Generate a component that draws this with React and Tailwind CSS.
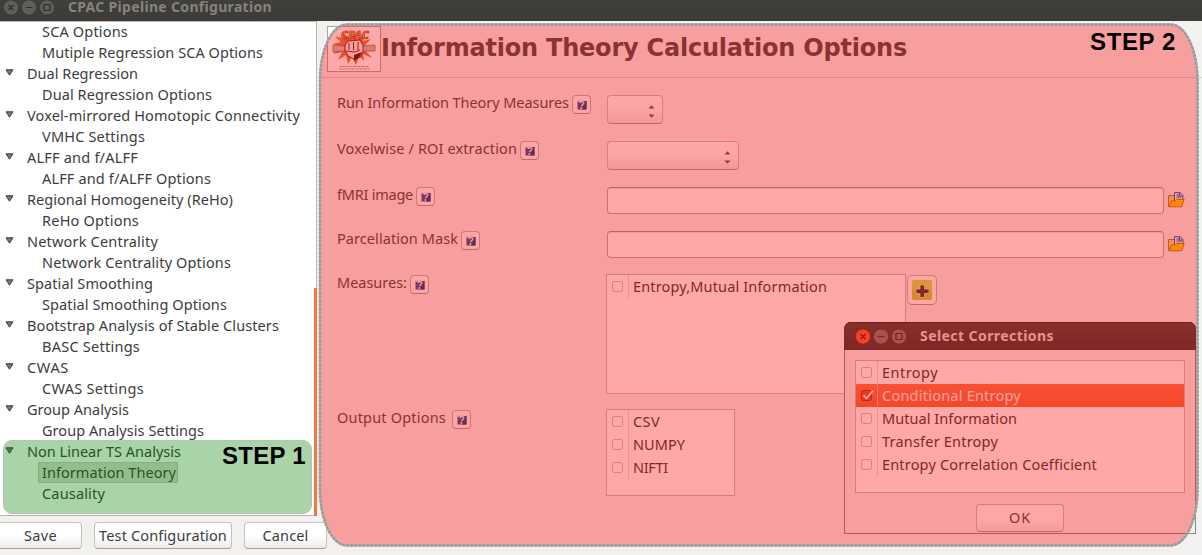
import { useLayoutEffect, useRef } from "react";

/* Single line of text, tracked so that it fills the given width. */
function Fit({ w, className = "", children }) {
  const ref = useRef(null);
  useLayoutEffect(() => {
    const el = ref.current;
    el.style.letterSpacing = "0px";
    const natural = el.getBoundingClientRect().width;
    el.style.letterSpacing = `${(w - natural) / children.length}px`;
  }, [w, children]);
  return (
    <span ref={ref} className={`inline-block shrink-0 whitespace-nowrap ${className}`}>
      {children}
    </span>
  );
}

const TREE = [
  ["SCA Options", 86, 1],
  ["Mutiple Regression SCA Options", 221, 1],
  ["Dual Regression", 111, 0],
  ["Dual Regression Options", 170, 1],
  ["Voxel-mirrored Homotopic Connectivity", 273, 0],
  ["VMHC Settings", 103, 1],
  ["ALFF and f/ALFF", 111, 0],
  ["ALFF and f/ALFF Options", 169, 1],
  ["Regional Homogeneity (ReHo)", 206, 0],
  ["ReHo Options", 97, 1],
  ["Network Centrality", 131, 0],
  ["Network Centrality Options", 189, 1],
  ["Spatial Smoothing", 126, 0],
  ["Spatial Smoothing Options", 185, 1],
  ["Bootstrap Analysis of Stable Clusters", 252, 0],
  ["BASC Settings", 98, 1],
  ["CWAS", 42, 0],
  ["CWAS Settings", 102, 1],
  ["Group Analysis", 102, 0],
  ["Group Analysis Settings", 162, 1],
  ["Non Linear TS Analysis", 154, 0],
  ["Information Theory", 134, 1],
  ["Causality", 63, 1],
];

function TreeRow({ label, width, child }) {
  const selected = label === "Information Theory";
  return (
    <li className="flex h-[21px] shrink-0 items-center">
      {child ? (
        <span
          className={`ml-[38px] flex h-[21px] items-center border pb-px pl-[3px] pr-px ${
            selected ? "border-[#cfcbc6] bg-[#e1ddd8]" : "border-transparent"
          }`}
        >
          <Fit w={width}>{label}</Fit>
        </span>
      ) : (
        <>
          <svg width="9" height="7" viewBox="0 0 9 7" className="mb-[3px] ml-[5px] mr-[13px] shrink-0">
            <path d="M1 .8h7L4.5 6.2z" fill="#7b7a76" stroke="#3c3b37" strokeWidth="1" />
          </svg>
          <Fit w={width} className="pb-px">{label}</Fit>
        </>
      )}
    </li>
  );
}

function WindowButtons({ active }) {
  const fill = active ? "#7d7a74" : "#5f5e59";
  const ink = active ? "#34332f" : "#2e2d2a";
  return (
    <svg width="52" height="17" viewBox="0 0 52 17" className="shrink-0">
      <circle cx="8" cy="8.5" r="7.6" fill={active ? "#f4603a" : fill} stroke={active ? "#4a2a22" : "#35342f"} strokeWidth=".7" />
      <circle cx="26" cy="8.5" r="7.6" fill={fill} stroke="#35342f" strokeWidth=".7" />
      <circle cx="44" cy="8.5" r="7.6" fill={fill} stroke="#35342f" strokeWidth=".7" />
      <path d="M5.500 6l5 5M10.500 6l-5 5M22.500 8.500h7M41 5.500h6v6h-6z" fill="none" stroke={ink} strokeWidth="1.200" />
    </svg>
  );
}

function HelpButton({ className = "" }) {
  return (
    <span
      className={`flex h-[19px] w-[19px] shrink-0 items-center justify-center rounded-[4px] border border-[#b9b5af] border-b-[#a29d97] bg-[#fbfafa] ${className}`}
    >
      <svg width="10" height="10" viewBox="0 0 10 10">
        <path d="M.5 1h9v8.500h-9z" fill="#2c5594" />
        <path d="M5 9.500L9.500 .5v9z" fill="#1f3f86" />
        <path d="M.5 .5h6L5 2H.5z" fill="#c9d6ea" />
        <path d="M3 3C3.500 1.200 7.200 1 6.800 3.200 6.500 4.500 4.900 4.600 4.600 6.200" fill="none" stroke="#f2f5fa" strokeWidth="1.300" />
        <path d="M3.600 7.200h1.600v1.600H3.600z" fill="#fff" />
      </svg>
    </span>
  );
}

function Field({ label, width, gap = "ml-[3px]", children }) {
  return (
    <>
      <div className="flex items-start">
        <Fit w={width} className="-mt-px h-4 leading-4">{label}</Fit>
        <HelpButton className={gap} />
      </div>
      <div className="flex items-start">{children}</div>
    </>
  );
}

function Select({ className }) {
  return (
    <div
      className={`flex h-[29px] items-center justify-end rounded-[4px] border border-[#c4bfb8] border-b-[#a39d96] bg-linear-to-b from-white via-[#fbfafa] to-[#e9e7e6] pr-[7px] pt-[3px] ${className}`}
    >
      <svg width="7" height="13" viewBox="0 0 7 13">
        <path d="M.5 3.500L3.500 .3l3 3.200zM.5 9.500h6l-3 3.200z" fill="#5c5a55" />
      </svg>
    </div>
  );
}

function FileInput() {
  return (
    <>
      <div className="h-[27px] w-[557px] rounded-[4px] border border-[#b0aaa3] border-t-[#9b958e] bg-white shadow-[inset_0_1px_0_#ebe9e7]" />
      <svg width="17" height="16" viewBox="0 0 17 16" className="ml-1 mt-[5px]">
        <path d="M.6 14.500V3.500h5.500l1 1.500V12z" fill="#f6d878" stroke="#b0801c" />
        <path d="M6.500 9V.6h5.500L15 3.500V9z" fill="#e4f0ff" stroke="#1c5fb0" />
        <path d="M8.500 3h3M8.500 5h5M11.500 1v3H15" fill="none" stroke="#1c5fb0" />
        <path d="M.7 14.800l3-6h3.500l1.500-1.500h7.500l-2.500 7.500z" fill="#fbcf00" stroke="#b0801c" />
      </svg>
    </>
  );
}

function CheckRow({ label, width, checked }) {
  return (
    <div
      className={`flex h-[23px] items-center ${
        checked ? "bg-linear-to-b from-[#f4794f] to-[#ef6b3d] text-[#fdf3ef]" : "text-[#3c3c3c]"
      }`}
    >
      <span className="flex h-full w-[22px] items-center border-r border-[#d3cfcb]/70 pl-[5px]">
        <svg width="15" height="13" viewBox="0 0 15 13" className="shrink-0 overflow-visible">
          <rect x=".5" y="1.500" width="10" height="10" rx="1.800" fill={checked ? "#e0552b" : "#fff"} stroke={checked ? "#a83a18" : "#c9c3bd"} />
          {checked && <path d="M2.500 6l3 3.500L12 1.800" fill="none" stroke="#fff" strokeWidth="1.700" />}
        </svg>
      </span>
      <Fit w={width} className="ml-1 pb-0.5">{label}</Fit>
    </div>
  );
}

function CheckList({ items, className }) {
  return (
    <div className={`shrink-0 border border-[#c2bcb6] bg-white ${className}`}>
      {items.map(([label, width, checked]) => (
        <CheckRow key={label} label={label} width={width} checked={checked} />
      ))}
    </div>
  );
}

function Button({ label, width, className }) {
  return (
    <button
      className={`flex shrink-0 items-center justify-center rounded-[4px] border border-[#c4c0bb] border-b-[#a5a09a] bg-linear-to-b from-white from-50% to-[#edebea] pb-0.5 ${className}`}
    >
      <Fit w={width}>{label}</Fit>
    </button>
  );
}

function Logo() {
  return (
    <svg width="54" height="46" viewBox="0 0 54 46" className="shrink-0">
      <rect x=".5" y=".5" width="53" height="45" fill="#fff" stroke="#a9a5a1" />
      <path
        d="M27 9l3 4 8-5-2 7 8-2-6 6 8 3-8 2 7 8-9-4 1 7-5-5-3 9-4-8-4 7-2-9-8 5 4-8-9 2 7-7-7-3 8-2-6-6 9 3-2-7 7 6z"
        fill="#e2733c"
      />
      <path d="M6 19l12 1v5l-12 1zM35 20l13-1v6H35z" fill="#c9bcb6" stroke="#8b7268" strokeWidth=".8" />
      <path d="M18 19l3-4 12-1 3 5v7l-3 5-6 2-6-3-3-6z" fill="#f8efec" stroke="#52231a" strokeWidth=".9" />
      <path d="M22 17v7M26.500 16v8M31 16v8M19 25l9 1 5-2" fill="none" stroke="#64291f" strokeWidth="1" />
      <path d="M27 29l8-3-3 6-5 3z" fill="#471a14" />
      <text x="14" y="13" fontFamily="DejaVu Sans" fontSize="10.500" fontWeight="bold" fontStyle="italic" fill="#efa04c" stroke="#7a3c14" strokeWidth=".6" textLength="28" lengthAdjust="spacingAndGlyphs">
        CPAC
      </text>
      <path d="M13 40.500h29M12 43h31" stroke="#a5a09d" strokeWidth="1" strokeDasharray="2 .6" />
    </svg>
  );
}

export default function App() {
  return (
    <div className="relative flex h-[555px] w-[1202px] flex-col overflow-hidden bg-[#f2f1f0] font-['Noto_Sans',sans-serif] text-[14.5px] leading-5 text-[#4c4c4c]">
      <header className="flex h-[21px] shrink-0 items-start bg-linear-to-b from-[#403f3a] to-[#3c3b37] pl-[3px]">
        <div className="-mt-px">
          <WindowButtons />
        </div>
        <Fit w={204} className="ml-[13px] text-[14px] font-bold leading-[14px] text-[#85837c]">CPAC Pipeline Configuration</Fit>
      </header>

      <div className="flex min-h-0 flex-1">
        <aside className="flex w-[317px] shrink-0 flex-col text-[#3c3c3c]">
          <div className="relative h-[495px] border-y border-r border-[#b8b4af] bg-white">
            <ul className="-mt-px flex flex-col">
              {TREE.map(([label, width, child]) => (
                <TreeRow key={label} label={label} width={width} child={child} />
              ))}
            </ul>
            <div className="absolute -right-px bottom-[-1px] h-[228px] w-[3px] bg-[#f07746]" />
            <div className="absolute left-[3px] top-[418px] flex h-[74px] w-[309px] justify-end rounded-[9px] border border-[#b5c4b5] bg-[rgba(0,128,0,0.34)] pr-[5px] pt-[5px]">
              <Fit w={84} className="font-['Liberation_Sans',sans-serif] text-[24px] font-bold leading-5 text-black">STEP 1</Fit>
            </div>
          </div>
          <div className="-ml-[3px] mt-1.5 flex gap-3">
            <Button label="Save" width={33} className="h-[27px] w-[85px] pl-0.5" />
            <Button label="Test Configuration" width={128} className="h-[27px] w-[138px]" />
            <Button label="Cancel" width={46} className="h-[27px] w-[83px]" />
          </div>
        </aside>

        <main className="ml-[3px] flex flex-1 flex-col">
          <div className="flex h-[57px] shrink-0 items-start border-b border-[#d5d1cd] pl-[7px] pt-[5px]">
            <Logo />
            <Fit w={526} className="mt-[6px] font-['DejaVu_Sans',sans-serif] text-[24px] font-bold leading-8">Information Theory Calculation Options</Fit>
          </div>
          <div className="grid grid-cols-[270px_1fr] grid-rows-[46px_46px_44px_44px_135px_1fr] pl-[17px] pt-[17px]">
            <Field label="Run Information Theory Measures" width={232}>
              <Select className="w-14" />
            </Field>
            <Field label="Voxelwise / ROI extraction" width={180}>
              <Select className="w-[132px]" />
            </Field>
            <Field label="fMRI image" width={76}>
              <FileInput />
            </Field>
            <Field label="Parcellation Mask" width={121}>
              <FileInput />
            </Field>
            <Field label="Measures:" width={70}>
              <CheckList items={[["Entropy,Mutual Information", 194]]} className="-ml-px -mt-px h-[120px] w-[300px]" />
              <span className="ml-px flex h-[30px] w-[30px] items-center justify-center rounded-[5px] border border-[#bdb8b1] border-b-[#a39d96] bg-[#fbfafa]">
                <svg width="20" height="20" viewBox="0 0 20 20">
                  <rect width="20" height="20" rx="2" fill="#c4e258" />
                  <rect y="10" width="20" height="10" rx="2" fill="#b8d644" />
                  <path d="M8 5h4.500v4H17v4.500h-4.500v4H8v-4H4V9h4z" fill="#3f3a36" stroke="#efe4b0" strokeWidth=".8" />
                </svg>
              </span>
            </Field>
            <Field label="Output Options" width={109} gap="ml-1.5">
              <CheckList
                items={[["CSV", 27], ["NUMPY", 52], ["NIFTI", 35]]}
                className="-ml-px -mt-px h-[87px] w-[129px]"
              />
            </Field>
          </div>
        </main>
      </div>

      <section className="absolute left-[844px] top-[322px] flex h-[212px] w-[352px] flex-col rounded-t-[7px] border border-[#8b8783] border-t-[#2c2b28] bg-[#f2f1f0]">
        <div className="-mx-px -mt-px flex h-7 shrink-0 items-center rounded-t-[7px] border-t border-[#2c2b28] bg-linear-to-b from-[#474641] to-[#3a3935] pl-[11px]">
          <WindowButtons active />
          <Fit w={134} className="ml-[13px] pb-0.5 text-[14px] font-bold text-[#dfdbd2]">Select Corrections</Fit>
        </div>
        <CheckList
          items={[
            ["Entropy", 56],
            ["Conditional Entropy", 139, true],
            ["Mutual Information", 135],
            ["Transfer Entropy", 116],
            ["Entropy Correlation Coefficient", 215],
          ]}
          className="ml-2.5 mt-2.5 h-[133px] w-[330px]"
        />
        <Button label="OK" width={22} className="ml-[131px] mt-[11px] h-7 w-[88px]" />
      </section>

      <svg className="absolute left-0 top-0" width="1202" height="555" viewBox="0 0 1202 555">
        <rect x="320" y="24.500" width="877.500" height="521" rx="27" ry="56" fill="rgb(255,6,6)" fillOpacity=".35" />
        <rect x="320" y="24.500" width="877.500" height="521" rx="27" ry="56" fill="none" stroke="#b9b3b1" strokeWidth="2" />
        <rect x="320" y="24.500" width="877.500" height="521" rx="27" ry="56" fill="none" stroke="#9b9b99" strokeWidth="2.500" strokeDasharray="3 1" />
      </svg>
      <Fit w={86} className="absolute left-[1090px] top-8 font-['Liberation_Sans',sans-serif] text-[24px] font-bold leading-5 text-black">STEP 2</Fit>
    </div>
  );
}
